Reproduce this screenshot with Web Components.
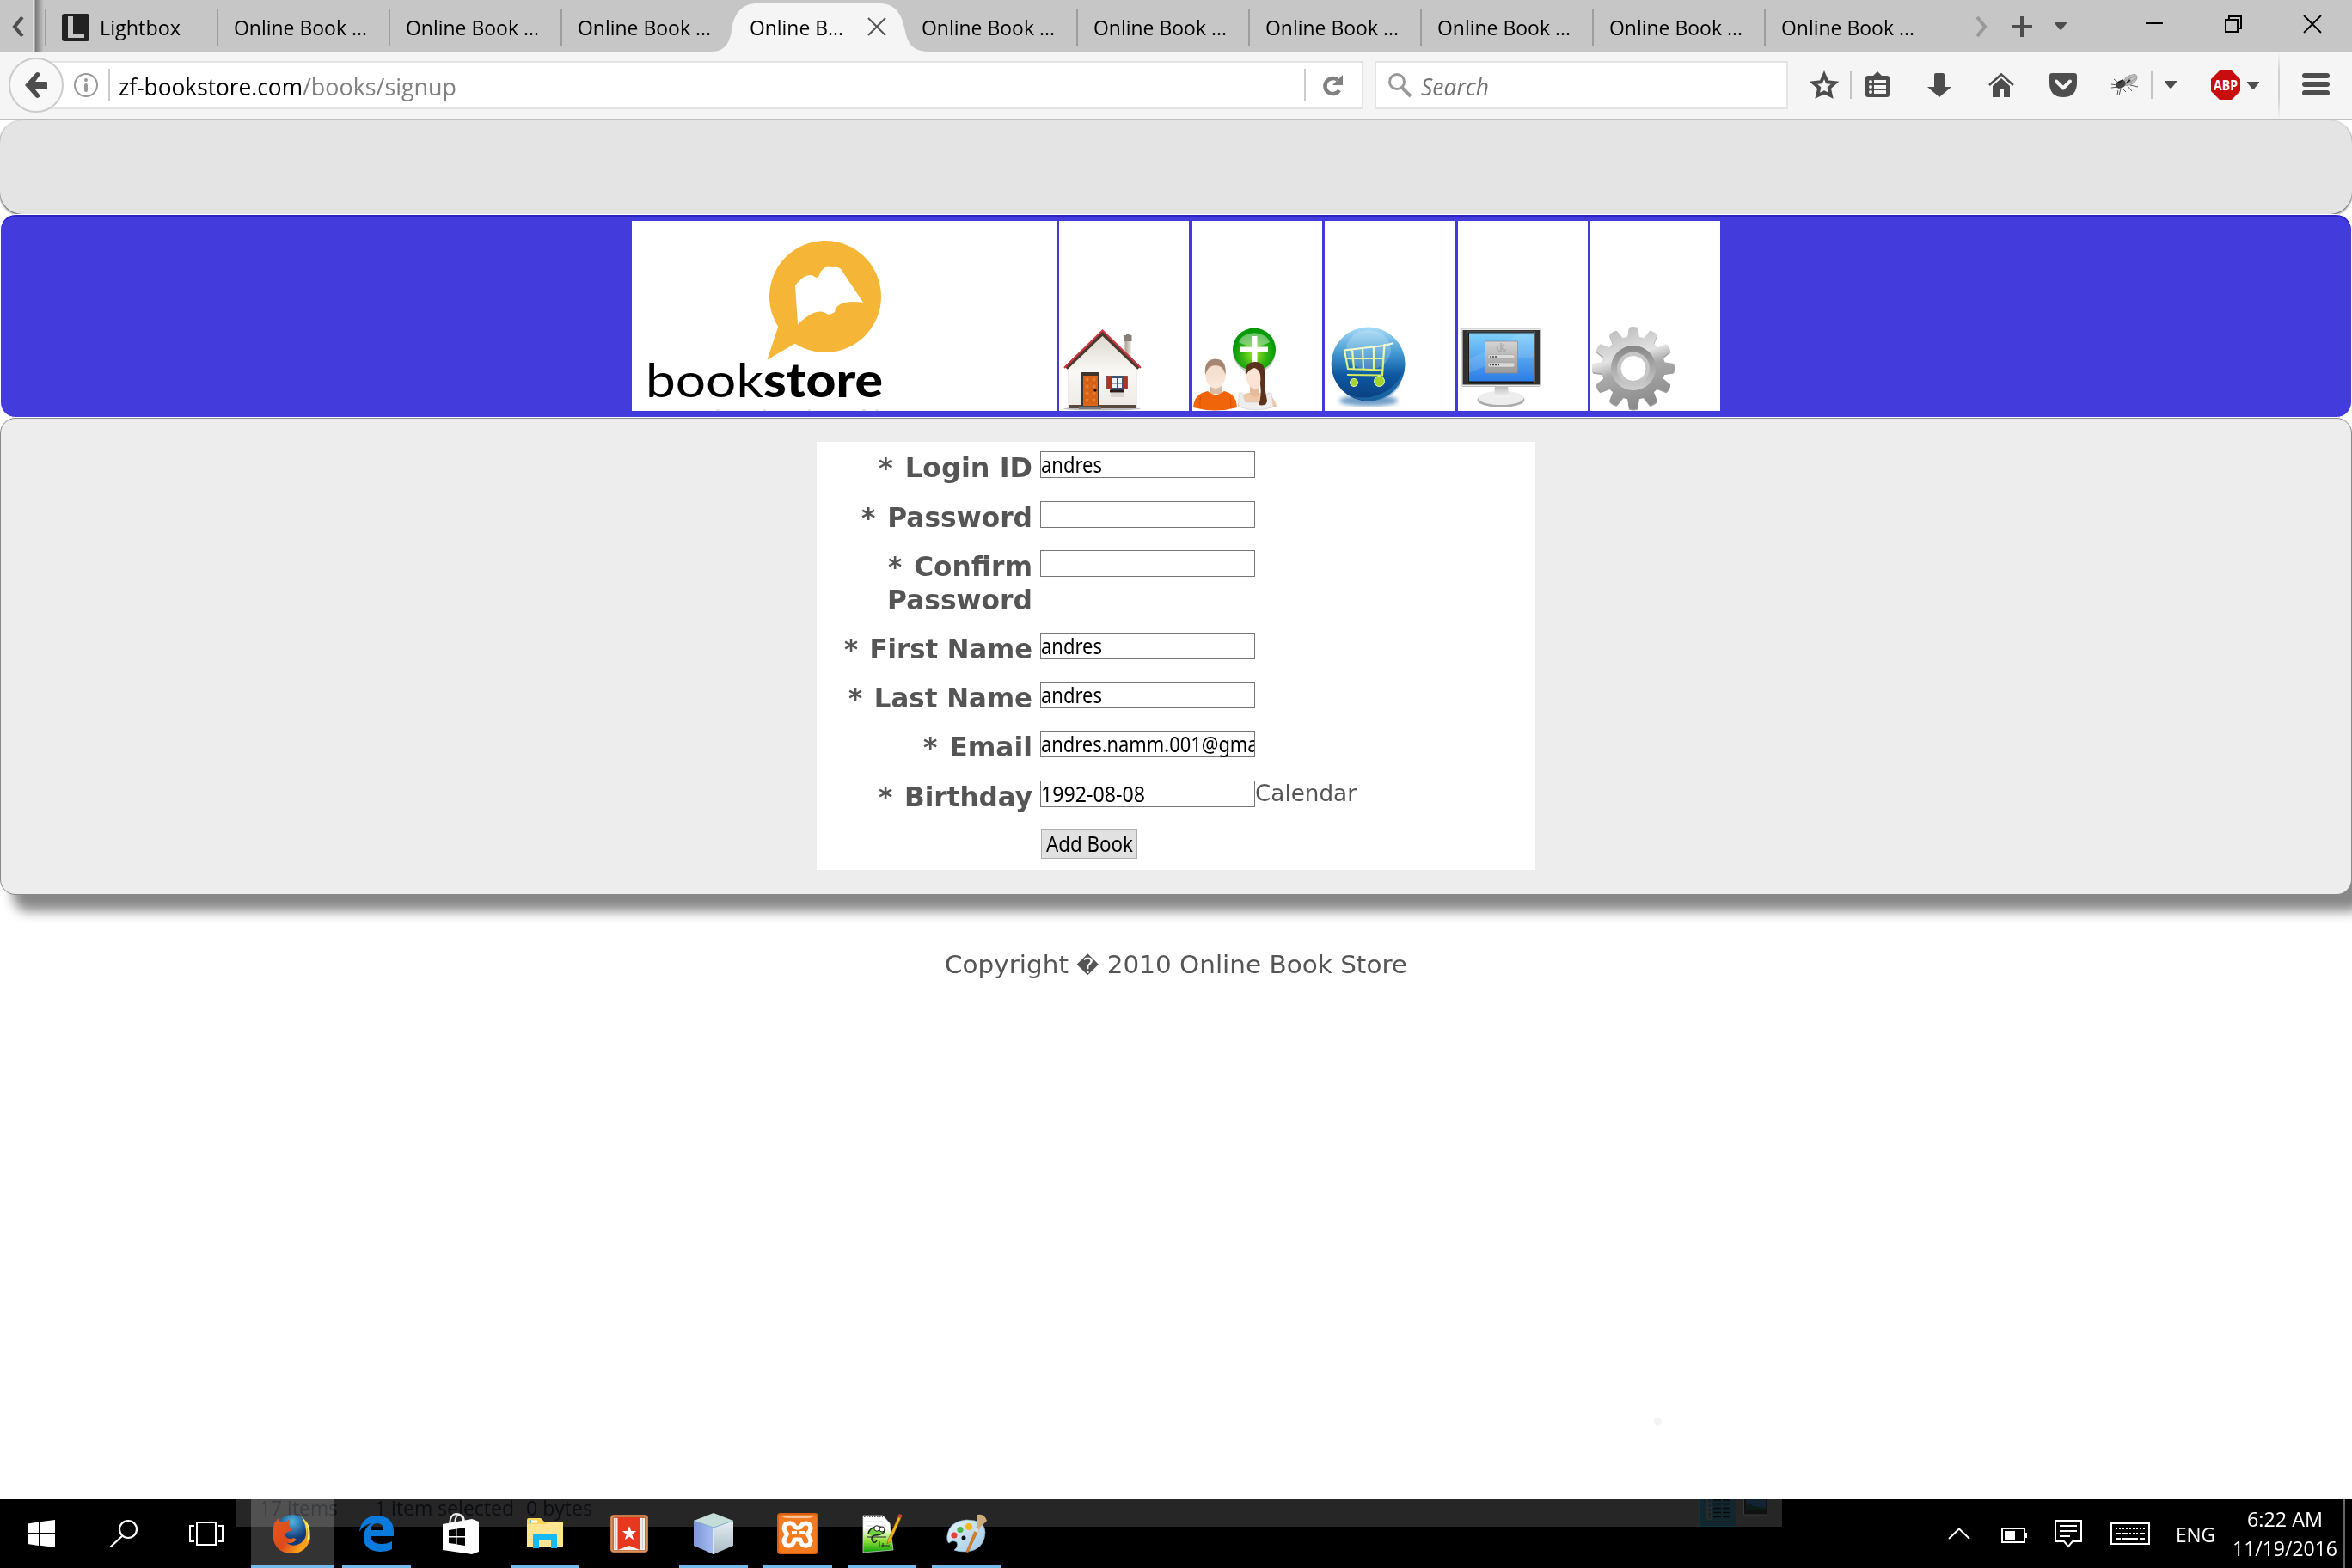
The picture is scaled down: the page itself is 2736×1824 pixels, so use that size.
<!DOCTYPE html>
<html lang="en">
<head>
<meta charset="utf-8">
<title>Online Book Store</title>
<style>
html,body{margin:0;padding:0;background:#fff}
body{width:2736px;height:1824px;overflow:hidden;font-family:"Open Sans","Noto Sans",sans-serif}
</style>
</head>
<body>
<desktop-screen></desktop-screen>
<script>
const define=(name,css,html)=>customElements.define(name,class extends HTMLElement{
  constructor(){super();this.attachShadow({mode:'open'}).innerHTML='<style>*{box-sizing:border-box}'+css+'</style>'+html;}
});

/* Text set to an exact advance width */
customElements.define('fit-text',class extends HTMLElement{
  connectedCallback(){
    const w=+this.getAttribute('w');
    if(!this.shadowRoot)this.attachShadow({mode:'open'}).innerHTML='<style>:host{display:block;flex:none;white-space:pre;width:'+w+'px}span{display:inline-block;transform-origin:0 50%}</style><span><slot></slot></span>';
    const s=this.shadowRoot.querySelector('span');
    const n=s.getBoundingClientRect().width;
    if(n)s.style.transform='scaleX('+(w/n)+')';
  }
});

let teeth='';
for(let i=0;i<12;i++)teeth+='<path d="M43 12 L45 -1 Q50 -3 55 -1 L57 12Z" transform="rotate('+i*30+' 50 46)"/>';

const ICONS={
left:['0 0 14 24','<path d="M12 1L3 12l9 11" fill="none" stroke="#4d4d4d" stroke-width="4"/>'],
right:['0 0 14 24','<path d="M2 1l9 11-9 11" fill="none" stroke="#999" stroke-width="4"/>'],
lightbox:['0 0 32 32','<rect width="32" height="32" rx="3" fill="#222"/><path d="M7 3h6v20h13v5H7z" fill="#c6c6c6"/>'],
tabx:['0 0 20 20','<path d="M0 0l20 20M20 0L0 20" stroke="#555" stroke-width="2"/>'],
plus:['0 0 24 24','<path d="M12 0v24M0 12h24" stroke="#4d4d4d" stroke-width="4"/>'],
tri:['0 0 14 9','<path d="M0 0h14v1L8 8.500H6L0 1z" fill="#4d4d4d"/>'],
min:['0 0 20 20','<path d="M0 9h20" stroke="#000" stroke-width="2"/>'],
restore:['0 0 20 20','<path d="M1 5h14v14H1zM5 5V1h14v14h-4" fill="none" stroke="#000" stroke-width="2"/>'],
close:['0 0 20 20','<path d="M0 0l20 20M20 0L0 20" stroke="#000" stroke-width="1.800"/>'],
back:['0 0 27 32','<path d="M1 16L14 1.500Q16.500 0 19 3.500L13 12h13q1 0 1 1v7q0 1-1 1H13l6 7.500Q16.500 32 14 30.500z" fill="#4d4d4d"/>'],
info:['0 0 28 28','<circle cx="14" cy="14" r="13" fill="none" stroke="#999" stroke-width="2"/><circle cx="14" cy="8" r="2" fill="#999"/><path d="M14 14v6" stroke="#999" stroke-width="4" stroke-linecap="round"/>'],
reload:['0 0 22 24','<path d="M18 18A9 9 0 1 1 16 6" fill="none" stroke="#808080" stroke-width="4.500"/><path d="M22 0v12H10z" fill="#808080"/>'],
mag:['0 0 28 28','<circle cx="10" cy="10" r="8.500" fill="none" stroke="#999" stroke-width="3"/><path d="M16 17l10 10" stroke="#999" stroke-width="4"/>'],
star:['0 0 32 32','<path d="M16 4l3.600 8.300 9 .9-6.800 6 2 9L16 24.500 8.200 28.200l2-9-6.800-6 9-.9z" fill="none" stroke="#4d4d4d" stroke-width="4"/>'],
list:['0 0 28 30','<path d="M3 5h6l5-5 5 5h6q3 0 3 3v19q0 3-3 3H3q-3 0-3-3V8q0-3 3-3z" fill="#4d4d4d"/><g fill="#f5f5f5"><circle cx="6" cy="12" r="2"/><circle cx="6" cy="18" r="2"/><circle cx="6" cy="24" r="2"/><path d="M10 10h14v4H10zM10 16h14v4H10zM10 22h14v4H10z"/></g>'],
down:['0 0 28 28','<path d="M10 0h8q2 0 2 2v14h8L14 28 0 16h8V2q0-2 2-2z" fill="#4d4d4d"/>'],
home:['0 0 30 28','<path d="M1 14L15 1.500 29 14" fill="none" stroke="#4d4d4d" stroke-width="2.500"/><path d="M15 6l10 9v13h-7V18h-5v10H5V15z" fill="#4d4d4d"/>'],
pocket:['0 0 32 28','<path d="M3 0h26q3 0 3 3v8q0 17-16 17T0 11V3q0-3 3-3z" fill="#4d4d4d"/><path d="M8 9.500l8 8 8-8" fill="none" stroke="#f5f5f5" stroke-width="4" stroke-linecap="round" stroke-linejoin="round"/>'],
fly:['0 0 32 26','<g fill="none" stroke="#555" stroke-width="1"><path d="M3 6l5 4M0 12l7 1M0 16l8-1M11 17l-2 8M8 19l-1 5M19 14l5 6M22 13l9 2M13 17l4 4"/></g><ellipse cx="22" cy="7" rx="9" ry="5" transform="rotate(-32 22 7)" fill="#c2c2c2" stroke="#999"/><path d="M14 9l14-7M17 12l12-7M19 4l5 7" stroke="#888" stroke-width=".8"/><ellipse cx="11" cy="12" rx="6" ry="4.500" transform="rotate(-25 11 12)" fill="#444"/><path d="M8 10l6-3M18 10l4-3" stroke="#222" stroke-width="1.800"/>'],
abp:['0 0 34 34','<path d="M10 0h14l10 10v14L24 34H10L0 24V10z" fill="#c70d0d"/><text x="3" y="22.500" font-family="Open Sans" font-weight="bold" font-size="16" fill="#fff" textLength="28" lengthAdjust="spacingAndGlyphs">ABP</text>'],
menu:['0 0 32 26','<g fill="#4d4d4d"><rect width="32" height="6" rx="3"/><rect y="10" width="32" height="6" rx="3"/><rect y="20" width="32" height="6" rx="3"/></g>'],

logo:['0 0 494 221','<g transform="translate(-735 -257)"><path d="M905.600 379L892.500 418.500 926 399z" fill="#f5b637"/><circle cx="960" cy="345" r="65" fill="#f5b637"/><path d="M925 332Q938 316 947 321.500Q951 325 953 320Q957 308 968 311Q975 310 978 312.700L1004 351.700Q973 348 971 363Q964 368 960 364Q948 358 928 377.500z" fill="#fff"/><g font-family="Lato,Open Sans,sans-serif" font-size="55"><text x="751" y="462" textLength="137" lengthAdjust="spacingAndGlyphs">book</text><text x="888" y="462" font-weight="900" textLength="139" lengthAdjust="spacingAndGlyphs">store</text></g><path d="M833 477h4M887 477h4M940 477h3M1003 477h4M1018 477h4" stroke="#ccc" stroke-width="1"/></g>'],

house:['0 0 96 96','<defs><linearGradient id="hw" x2="0" y2="1"><stop offset="0" stop-color="#dcd8cf"/><stop offset=".5" stop-color="#faf8f5"/><stop offset="1" stop-color="#eee9e4"/></linearGradient><linearGradient id="hc"><stop offset="0" stop-color="#a39b8b"/><stop offset="1" stop-color="#f0ede6"/></linearGradient></defs><ellipse cx="50" cy="93.500" rx="45" ry="2" fill="#bbb"/><rect x="76.500" y="9" width="7.500" height="28" fill="url(#hc)"/><path d="M75.500 8h9v7h-9zM78 6.500h4v2h-4z" fill="#867f77"/><path d="M11 42L50.500 8 90 42v50H11z" fill="url(#hw)" stroke="#ccc8c0" stroke-width=".7"/><path d="M8 46L50.500 5.500 93 46" fill="none" stroke="#4a3a30" stroke-width="5"/><path d="M6 46L50.500 2.500 95 46" fill="none" stroke="#d23540" stroke-width="2"/><rect x="11" y="89" width="79" height="4" fill="#594a40"/><rect x="26" y="51" width="21" height="39" fill="#3f352d"/><rect x="28" y="55" width="17" height="35" fill="#dd6518"/><g fill="#e87a2c" stroke="#b24b0c" stroke-width=".5"><path d="M30 57h5v5h-5zM38 57h5v5h-5zM30 65h5v5h-5zM38 65h5v5h-5zM30 73h5v5h-5zM38 73h5v5h-5zM30 81h5v5h-5zM38 81h5v5h-5z"/></g><circle cx="42" cy="72" r="1.700" fill="#111"/><rect x="23" y="91" width="26" height="3" fill="#7a7a7a"/><rect x="55.500" y="55.500" width="24" height="15" fill="#b23420" stroke="#61261f" stroke-width=".6"/><rect x="60" y="55" width="15" height="17" fill="#3e5675"/><path d="M62 58h5v5h-5zM68.500 58H73v5h-4.500zM62 64.500h5V69h-5zM68.500 64.500H73V69h-4.500z" fill="#eef3f5"/><rect x="59" y="71.500" width="17" height="3" fill="#2c1b17"/><rect x="60" y="75" width="15" height="5" fill="#ddd4cf"/>'],

people:['0 0 98 96','<defs><radialGradient id="pg" cy=".62"><stop offset="0" stop-color="#9ae620"/><stop offset=".6" stop-color="#2fb312"/><stop offset="1" stop-color="#079a08"/></radialGradient><linearGradient id="ps" x2="0" y2="1"><stop offset="0" stop-color="#f0d8c4"/><stop offset="1" stop-color="#fbe9dc"/></linearGradient></defs><ellipse cx="72" cy="27" rx="25" ry="25" fill="#999" opacity=".5"/><circle cx="72" cy="24.500" r="25" fill="url(#pg)"/><path d="M54 16a18.500 14 0 0 1 36 0q-18 10-36 0z" fill="#fff" opacity=".4"/><path d="M69 9h6.500v12.500H88v6.500H75.500v14H69V28H56v-6.500h13z" fill="#fff"/><path d="M20 64h14v12H20z" fill="#d9bda5"/><path d="M1 92Q2 76 18 73q9 8 19 0 14 3 15 19-25 7-51 0z" fill="#f0640a"/><path d="M10 80q-2 8-1 13M44 80q1 6 1 13" stroke="#d95500" fill="none"/><path d="M15 51q0-15 12-15t12 15q0 17-12 19-12-2-12-19z" fill="url(#ps)"/><path d="M15 54Q13 36 27 35.500 40 36 38.500 54 36 43 27 43T15 54z" fill="#a48672"/><path d="M53 91q0-14 12-16h16q15 2 17 16-22 7-45 0z" fill="#efc9a7"/><path d="M54 75h4l4 11h20l6-11h4l2 16q-20 8-40 0z" fill="#eeeeee" stroke="#ccc" stroke-width=".6"/><path d="M67 65h11v12l-5 4-6-4z" fill="#e6bd9c"/><path d="M62 54q0-14 11-14t11 14q-1 14-11 17-10-3-11-17z" fill="#fbe4d3"/><path d="M62 55Q60 39 73 39t11 17q0 15 3 28 0 7-10 5 4-9 2-25Q81 48 72 46 66 47 62 55z" fill="#5c321c"/>'],

cart:['0 0 98 96','<defs><linearGradient id="cg" x2="0" y2="1"><stop offset="0" stop-color="#a8dcf8"/><stop offset=".35" stop-color="#439ad2"/><stop offset=".65" stop-color="#0d58a0"/><stop offset="1" stop-color="#0b3d7d"/></linearGradient><linearGradient id="cl" x2="0" y2="1"><stop offset="0" stop-color="#f7fbe0"/><stop offset="1" stop-color="#d2ec5e"/></linearGradient><filter id="cb"><feGaussianBlur stdDeviation="2.500"/></filter></defs><ellipse cx="51" cy="84" rx="34" ry="6.500" fill="#6d9dc6" filter="url(#cb)"/><circle cx="50.600" cy="41.500" r="43" fill="url(#cg)"/><ellipse cx="51" cy="25" rx="26" ry="23" fill="#fff" opacity=".2"/><path d="M60 78q22-7 31-27-2 28-31 33-18 2-30-6 16 5 30 0z" fill="#2c81bd" opacity=".5"/><g fill="none" stroke="url(#cl)" stroke-width="2.200"><path d="M80 17L69.500 20 23 25.500 27 47l40 1.500M69.500 18L67 54.500 26 54M32 25l2 22M44 23l1 24M57 22l0 26M25 35h43"/></g><circle cx="34" cy="63" r="4.500" fill="#a2d62c" stroke="#eef7c0"/><circle cx="63.500" cy="61.500" r="6" fill="#a2d62c" stroke="#eef7c0"/>'],

monitor:['0 0 98 96','<defs><linearGradient id="mg" x2="0" y2="1"><stop offset="0" stop-color="#7fd0fa"/><stop offset="1" stop-color="#2c7ce6"/></linearGradient><linearGradient id="ms" x2="0" y2="1"><stop offset="0" stop-color="#b5b5b5"/><stop offset="1" stop-color="#f5f5f5"/></linearGradient><linearGradient id="mc" x2="0" y2="1"><stop offset="0" stop-color="#d4d4d4"/><stop offset="1" stop-color="#999"/></linearGradient></defs><ellipse cx="50" cy="83" rx="27.500" ry="9" fill="#aaa"/><ellipse cx="50" cy="81" rx="26.500" ry="8" fill="#ededed"/><path d="M43 66h15l1 14H42z" fill="url(#ms)"/><rect x="4" y="0" width="92.500" height="67.500" rx="2" fill="#eee" stroke="#bbb" stroke-width="1"/><rect x="5.500" y="2" width="89.500" height="63.500" fill="#303030"/><rect x="11" y="4" width="78.500" height="59.500" fill="#161616" stroke="#777" stroke-width=".7"/><rect x="13" y="5.500" width="75" height="56" fill="url(#mg)"/><path d="M88 5.500v28L50 36 13 52V36L74 5.500z" fill="#fff" opacity=".12"/><rect x="31.500" y="15" width="38" height="37" rx="1" fill="url(#mc)" stroke="#888" stroke-width=".7"/><path d="M50 17v9m0-4l4-4m-4 4l4 4m-8-5q-2 5 4 6t5-3" fill="none" stroke="#aaa" stroke-width="1.500"/><rect x="35" y="30.500" width="31" height="5" rx="2" fill="#dadada" stroke="#999" stroke-width=".5"/><rect x="35" y="40" width="31" height="5" rx="2" fill="#dadada" stroke="#999" stroke-width=".5"/><path d="M37 33h10M37 42.500h12" stroke="#444" stroke-width="1.500" stroke-dasharray="2 1"/>'],

gear:['0 0 98 96','<defs><linearGradient id="gg" x2=".3" y2="1"><stop offset="0" stop-color="#b0b0b0"/><stop offset=".45" stop-color="#e2e2e2"/><stop offset=".6" stop-color="#aaa"/><stop offset="1" stop-color="#8c8c8c"/></linearGradient><linearGradient id="gi" x2="0" y2="1"><stop offset="0" stop-color="#858585"/><stop offset="1" stop-color="#d0d0d0"/></linearGradient><mask id="gm"><rect x="-5" y="-5" width="110" height="110" fill="#000"/><g fill="#fff"><circle cx="50" cy="46" r="37"/>'+teeth+'</g><circle cx="50" cy="46.500" r="15" fill="#000"/></mask></defs><g fill="#777" opacity=".7" transform="translate(0 1.500)">'+teeth+'</g><g mask="url(#gm)"><rect x="-2" y="-4" width="102" height="102" fill="url(#gg)"/><circle cx="50" cy="46" r="26" fill="url(#gi)"/><circle cx="50" cy="46.500" r="19" fill="#c6c6c6"/></g><circle cx="50" cy="46.500" r="15" fill="#fff" stroke="#aaa" stroke-width=".7"/>'],

win:['0 0 32 32','<path d="M0 4.500l13-2V15H0zM14.500 2.300L32 0v15H14.500zM0 16.500h13V30L0 28zM14.500 16.500H32V32l-17.500-2.300z" fill="#fff"/>'],
search:['0 0 32 32','<circle cx="21" cy="11" r="10" fill="none" stroke="#fff" stroke-width="2.200"/><path d="M14 19L.5 31.500" stroke="#fff" stroke-width="2.200"/>'],
taskview:['0 0 40 28','<path d="M9 1h22v26H9zM6 5H1v18h5M34 5h5v18h-5" fill="none" stroke="#fff" stroke-width="2"/>'],
firefox:['0 0 46 46','<defs><radialGradient id="fb" cx=".5" cy=".2"><stop offset="0" stop-color="#4db8e4"/><stop offset="1" stop-color="#123a78"/></radialGradient><linearGradient id="fo" x2=".9" y2=".6"><stop offset="0" stop-color="#e25a1c"/><stop offset=".6" stop-color="#dd4a1c"/><stop offset="1" stop-color="#f9a01b"/></linearGradient></defs><circle cx="23" cy="21" r="20" fill="url(#fb)"/><path d="M33 3q10 7 10 19 0 17-18 21 16-10 14-24-1-10-6-16z" fill="#ffd93a"/><path d="M2 11l5-6 2 5q4-2 7 0l4-4-1 7 3 6-6 3q-3 3 1 6 4 2 8 0l3 2q-6 6-12 3 7 7 17 1 9-7 7-18 6 8 3 16-6 14-20 14Q5 46 1 30 0 22 2 11z" fill="url(#fo)"/><path d="M39 8q7 10 3 22l-2 3q3-13-1-25z" fill="#fff07a"/>'],
edge:['0 0 40 42','<path d="M0 19Q3 0 21 0 40 1 40 19v5H13q1 9 13 9 7 0 12-3v9q-6 3-14 3Q5 41 5 25 5 14 15 9 5 10 0 19zM13 17h15q0-8-7-8t-8 8z" fill="#0a7bdc"/>'],
store:['0 0 42 48','<path d="M8 13Q9 1 16 1t8 9M14 12Q15 1 20 2t5 8" fill="none" stroke="#eee" stroke-width="2"/><path d="M0 13l34-6 8 3v35l-8 3-34-5z" fill="#fff"/><path d="M7 20l8-1.200V27H7zM16.500 18.600L26 17v10h-9.500zM7 28.500h8V36l-8-1zM16.500 28.500H26V38l-9.500-1.500z" fill="#000"/>'],
folder:['0 0 42 36','<path d="M0 2q0-2 2-2h14l4 4h20q2 0 2 2v26q0 2-2 2H2q-2 0-2-2z" fill="#fbd45a"/><path d="M0 7h22l3-3h17v28q0 2-2 2H2q-2 0-2-2z" fill="#ffe58f"/><path d="M3 2.500h9v3H3z" fill="#fff"/><path d="M3 2.500h2v3H3z" fill="#1ab7ea"/><path d="M7 35V20q0-2 2-2h24q2 0 2 2v15h-7V25H14v10z" fill="#16b9f2"/>'],
wunder:['0 0 44 44','<rect width="44" height="44" rx="4" fill="#bd6f43"/><rect x="1.500" y="1.500" width="41" height="41" rx="3" fill="none" stroke="#dc935f" stroke-width="1.500"/><rect x="4" y="4" width="36" height="37" fill="#f4efec"/><path d="M8.500 3h26v38L22 36 8.500 41z" fill="#e8371f"/><path d="M5.500 4v36M37.500 4v36" stroke="#d4c9c4" stroke-width="1"/><path d="M22 13l2.200 6h6l-5 4 2 6.500-5.200-4-5.200 4 2-6.500-5-4h6z" fill="#fff"/>'],
cube:['0 0 46 48','<defs><linearGradient id="q1"><stop offset="0" stop-color="#7d97d8"/><stop offset="1" stop-color="#a6bdf0"/></linearGradient><linearGradient id="q2" x2="0" y2="1"><stop offset="0" stop-color="#e5eef2"/><stop offset="1" stop-color="#a9bac5"/></linearGradient></defs><path d="M23 0l23 9-23 8L0 9z" fill="#c4ddd8"/><path d="M0 9l23 8v31L0 38z" fill="url(#q1)"/><path d="M46 9l-23 8v31l23-10z" fill="url(#q2)"/><path d="M0 9l23 8 23-8" fill="none" stroke="#8ab1d8" stroke-width="1"/><path d="M23 17v31" stroke="#e8f0ff" stroke-width="1.500"/>'],
xampp:['0 0 48 48','<rect width="48" height="48" rx="4" fill="#d75f0f"/><rect x="2" y="2" width="44" height="44" rx="3" fill="#f47a20"/><path d="M5 3h38q-2 3-8 3H13Q7 6 5 3z" fill="#fbc49a"/><path d="M12 12.500q4-2 7 1l2 3q3 1.500 6 0l2-3q5-3 8.500 0 3 4 0 8l-2 3 2 4q3 4 0 8-3.500 3-8 0.500-2-2-2.500-6h-7q-.500 4-2.500 6-4.500 2.500-8-.500-3-4 0-8l2-4-2-3q-3-4 .500-9z" fill="none" stroke="#fff" stroke-width="5" stroke-linejoin="round"/><path d="M17 22.500h6M25 22.500h8" stroke="#fff" stroke-width="3"/>'],
npp:['0 0 46 46','<defs><linearGradient id="ng" x2="0" y2="1"><stop offset=".35" stop-color="#fff"/><stop offset=".7" stop-color="#8ade33"/><stop offset="1" stop-color="#0da00d"/></linearGradient></defs><path d="M1 2h23l8 9 4 31L1 45z" fill="url(#ng)" stroke="#ddd" stroke-width=".7"/><path d="M2 3h22" stroke="#555" stroke-width="2" stroke-dasharray="1.500 1.500"/><path d="M4 9h20M4 14h24M4 19h24" stroke="#ccc" stroke-width=".8"/><path d="M7 23q2-8 12-8 6 0 7 6-5 4-11 4-6 1-3 7 3 3 5-1" fill="#6fd33a" stroke="#222" stroke-width="1.500"/><circle cx="17" cy="17" r="3.200" fill="#fff" stroke="#222"/><circle cx="23" cy="18" r="3" fill="#fff" stroke="#222"/><path d="M6 27h22M20 32v7m4-5v5m-2-2h10" stroke="#222" stroke-width="1"/><path d="M43 1l3 1.500L33 32l-4 3 1-5z" fill="#f0b417" stroke="#7a5a10" stroke-width=".6"/><path d="M43 0l3 1-1.500 4-3.500-1z" fill="#c63c3c"/>'],
paint:['0 0 47 46','<defs><linearGradient id="pp" x2="1" y2="1"><stop offset="0" stop-color="#e8f3fa"/><stop offset="1" stop-color="#9cc8e6"/></linearGradient></defs><path d="M1 25Q3 9 23 7q22 0 22 15-1 20-22 22-10 0-14-2 5-4 3-9-5-3-9 1-3-2-2-9z" fill="url(#pp)" stroke="#7fb0d2" stroke-width=".7"/><circle cx="9" cy="25" r="3.600" fill="#e4423a"/><circle cx="16" cy="18.500" r="3.600" fill="#4cb648"/><circle cx="26" cy="15" r="4" fill="#f6b51c"/><circle cx="20" cy="28" r="2.500" fill="#111"/><path d="M35 15l3 2-13 28-2-1z" fill="#e07d1c" stroke="#a5540b" stroke-width=".5"/><path d="M35 15l1-14q8-2 11 7l-9 9z" fill="#cdab7d"/><path d="M34 15l4 3-2 4-4-2z" fill="#ddd"/>'],
up:['0 0 26 14','<path d="M1 13L13 1.500 25 13" fill="none" stroke="#fff" stroke-width="2"/>'],
battery:['0 0 30 18','<path d="M1 1h26v16H1z" fill="none" stroke="#fff" stroke-width="2"/><path d="M4 4h12v10H4zM27 6h3v6h-3z" fill="#fff"/>'],
msg:['0 0 32 32','<path d="M1 1h30v24H21l-5 6-5-6H1zM6 7h20M6 13h20M6 19h12" fill="none" stroke="#fff" stroke-width="2"/>'],
kbd:['0 0 46 26','<rect x="1" y="1" width="44" height="24" fill="none" stroke="#fff" stroke-width="2"/><g stroke="#fff" stroke-width="2"><path d="M6 7h34" stroke-dasharray="2 2"/><path d="M6 13h6M14 13h18M34 13h6" stroke-dasharray="6 2 2 2 2 2 2 2 2 2"/><path d="M6 19h6M14 19h18M34 19h6"/></g>'],
details:['0 0 98 32','<path d="M.5 0v31.500h43V0" fill="#13262d" stroke="#0d3542"/><g stroke="#080b0d" stroke-width="1.500"><path d="M17 1h9M28 1h9M17 5.500h9M28 5.500h9M17 10.500h9M28 10.500h9M17 15.500h9M28 15.500h9M17 20.500h9M28 20.500h9"/></g><path d="M10 0v23h5V0M10 5h5m-5 5h5m-5 5h5m-5 5h5" fill="none" stroke="#39302b"/><path d="M52.500 0v18h27V0" fill="#111" stroke="#3a3a3a"/><path d="M55 0h23v10H55z" fill="#142334"/><path d="M55 7q5-4 8 1l15 2v2H55z" fill="#0e1c16"/>']
};
customElements.define('ui-icon',class extends HTMLElement{
  connectedCallback(){
    if(this.shadowRoot)return;
    const [box,body]=ICONS[this.getAttribute('name')];
    const d=box.split(' ');
    const w=this.getAttribute('w')||d[2],h=this.getAttribute('h')||d[3];
    this.attachShadow({mode:'open'}).innerHTML='<style>:host{display:block;flex:none;width:'+w+'px;height:'+h+'px}svg{display:block;overflow:visible}</style><svg width="'+w+'" height="'+h+'" viewBox="'+box+'" preserveAspectRatio="none">'+body+'</svg>';
  }
});

define('browser-tab',`
:host{display:flex;flex:none;width:200px;height:60px;align-items:center;position:relative}
i{width:2px;height:44px;background:#9d9d9d;margin-top:4px;flex:none}
:host([active]) i,:host([after]) i{visibility:hidden}
slot{display:flex;align-items:center}
.c{display:flex;align-items:center;padding:3px 0 0 18px;font-size:24px;color:#000;position:relative}
svg{display:none;position:absolute;left:-24px;top:0}
:host([active]) svg{display:block}
`,`<svg width="252" height="60"><path d="M0 60C20 60 22 42 24 30S34 4 52 4H196C214 4 221 18 224 32S230 60 252 60z" fill="#f5f5f5"/></svg><i></i><div class="c"><slot></slot></div>`);

define('tab-strip',`
:host{display:flex;height:60px;background:#c6c6c6;align-items:flex-start}
.edge{width:13px;height:60px;margin-left:10px;background:linear-gradient(90deg,#ddd 0 2px,#777 3px,#c6c6c6)}
.tabs{display:flex;margin-left:1px;height:60px}
ui-icon{margin-top:19px}
`,`<ui-icon name="left" style="margin-left:14px"></ui-icon><div class="edge"></div>
<div class="tabs">
<browser-tab><ui-icon name="lightbox" style="margin:0 12px 0 0"></ui-icon><fit-text w="94">Lightbox</fit-text></browser-tab>
<browser-tab><fit-text w="155">Online Book ...</fit-text></browser-tab>
<browser-tab><fit-text w="155">Online Book ...</fit-text></browser-tab>
<browser-tab><fit-text w="155">Online Book ...</fit-text></browser-tab>
<browser-tab active><fit-text w="109">Online B...</fit-text><ui-icon name="tabx" style="margin:-2px 0 0 29px"></ui-icon></browser-tab>
<browser-tab after><fit-text w="155">Online Book ...</fit-text></browser-tab>
<browser-tab><fit-text w="155">Online Book ...</fit-text></browser-tab>
<browser-tab><fit-text w="155">Online Book ...</fit-text></browser-tab>
<browser-tab><fit-text w="155">Online Book ...</fit-text></browser-tab>
<browser-tab><fit-text w="155">Online Book ...</fit-text></browser-tab>
<browser-tab><fit-text w="155">Online Book ...</fit-text></browser-tab></div>
<ui-icon name="right" style="margin-left:46px"></ui-icon>
<ui-icon name="plus" style="margin-left:28px"></ui-icon>
<ui-icon name="tri" style="margin-left:26px;margin-top:26px"></ui-icon>
<ui-icon name="min" style="margin-left:92px;margin-top:18px"></ui-icon>
<ui-icon name="restore" style="margin-left:72px;margin-top:18px"></ui-icon>
<ui-icon name="close" style="margin-left:72px;margin-top:18px"></ui-icon>`);

define('nav-toolbar',`
:host{display:flex;box-sizing:border-box;height:80px;background:#f5f5f5;border-bottom:2px solid #bdbdbd;align-items:center;font-size:27px}
.back{width:64px;height:64px;border:2px solid #ccc;border-radius:50%;background:#f8f8f8;margin-left:10px;display:flex;align-items:center;padding-left:16px;flex:none;position:relative;z-index:1}
.f{height:56px;background:#fff;border:2px solid #e4e4e4;display:flex;align-items:center;flex:none}
.url{width:1542px;margin-left:-30px;padding-left:40px}
.s{width:2px;height:38px;background:#ccc;flex:none}
fit-text{margin-top:3px}
.q{width:481px;margin-left:13px;padding-left:14px;color:#737373;font-style:italic}
.t{height:32px;background:#c4c4c4}
`,`<div class="back"><ui-icon name="back"></ui-icon></div>
<div class="f url"><ui-icon name="info"></ui-icon><div class="s" style="margin:0 10px 0 12px"></div><fit-text w="214">zf-bookstore.com</fit-text><fit-text w="179" style="color:#808080">/books/signup</fit-text><div class="s" style="margin-left:986px"></div><ui-icon name="reload" style="margin-left:21px"></ui-icon></div>
<div class="f q"><ui-icon name="mag"></ui-icon><fit-text w="79" style="margin-left:10px">Search</fit-text></div>
<ui-icon name="star" style="margin-left:26px"></ui-icon><div class="s t" style="margin-left:14px"></div>
<ui-icon name="list" style="margin-left:16px;margin-top:-2px"></ui-icon>
<ui-icon name="down" style="margin-left:44px"></ui-icon>
<ui-icon name="home" style="margin-left:43px"></ui-icon>
<ui-icon name="pocket" style="margin-left:41px"></ui-icon>
<ui-icon name="fly" style="margin-left:40px"></ui-icon><div class="s t" style="margin-left:14px"></div>
<ui-icon name="tri" style="margin-left:14px;margin-top:-2px"></ui-icon>
<ui-icon name="abp" style="margin-left:40px"></ui-icon><ui-icon name="tri" style="margin-left:8px"></ui-icon>
<div class="s" style="height:78px;margin-left:22px;background:linear-gradient(#f5f5f5,#d2d2d2 30% 70%,#f5f5f5)"></div><ui-icon name="menu" style="margin-left:26px;margin-top:-2px"></ui-icon>`);

define('store-nav',`
:host{display:flex;height:237px;background:#443bdc;border:1px solid #fff;border-radius:18px;box-sizing:border-box;position:relative;padding:7px 0 0 734px;box-shadow:inset 0 2px 0 #2d23c4}
.r{display:flex;height:221px}
.c{width:151px;margin-left:4px;background:#fff;display:flex;align-items:flex-end}
.n{margin-left:3px}
.l{width:494px;margin-left:0;overflow:hidden}
`,`<div class="r"><div class="c l"><ui-icon name="logo"></ui-icon></div>
<div class="c n"><ui-icon name="house"></ui-icon></div><div class="c"><ui-icon name="people"></ui-icon></div><div class="c n"><ui-icon name="cart"></ui-icon></div><div class="c"><ui-icon name="monitor"></ui-icon></div><div class="c n"><ui-icon name="gear"></ui-icon></div></div>`);

define('form-row',`
:host{display:flex;align-items:flex-start;height:57px}
.l{width:251px;margin-right:9px;display:flex;flex-direction:column;align-items:flex-end;font-weight:bold;font-size:32px;line-height:38.500px;color:#555}
`,`<div class="l"><slot name="label"></slot></div><slot></slot>`);

define('text-box',`
:host{display:block;width:250px;height:31px;border:1px solid #767676;box-sizing:border-box;overflow-x:clip;overflow-y:visible;background:#fff;color:#000;font:25.500px/28px "Noto Sans","Open Sans",sans-serif;flex:none}
`,`<slot></slot>`);

define('signup-form',`
:host{display:block;width:836px;height:498px;background:#fff;padding-top:11px;box-sizing:border-box;font-family:"DejaVu Sans",sans-serif}
b{letter-spacing:3px}
.b{width:112px;height:35px;margin-left:1px;border:1px solid #adadad;background:#e1e1e1;font:25.500px/32px "Noto Sans","Open Sans",sans-serif;padding-left:5px}
`,`<form-row style="height:58px"><fit-text slot="label" w="179"><b>*</b> Login ID</fit-text><text-box><fit-text w="71">andres</fit-text></text-box></form-row>
<form-row><fit-text slot="label" w="199"><b>*</b> Password</fit-text><text-box></text-box></form-row>
<form-row style="height:96px"><fit-text slot="label" w="168"><b>*</b> Confirm</fit-text><fit-text slot="label" w="169">Password</fit-text><text-box></text-box></form-row>
<form-row><fit-text slot="label" w="219"><b>*</b> First Name</fit-text><text-box><fit-text w="71">andres</fit-text></text-box></form-row>
<form-row><fit-text slot="label" w="214"><b>*</b> Last Name</fit-text><text-box><fit-text w="71">andres</fit-text></text-box></form-row>
<form-row style="height:58px"><fit-text slot="label" w="127"><b>*</b> Email</fit-text><text-box><fit-text w="314">andres.namm.001@gmail.com</fit-text></text-box></form-row>
<form-row style="height:56px"><fit-text slot="label" w="179"><b>*</b> Birthday</fit-text><text-box><fit-text w="121">1992-08-08</fit-text></text-box><fit-text w="118" style="font-size:26px;line-height:31px;color:#555">Calendar</fit-text></form-row>
<form-row><div class="b"><fit-text w="101">Add Book</fit-text></div></form-row>`);

define('store-page',`
:host{display:flex;flex-direction:column;height:1604px;background:#fff;overflow:hidden}
.top{height:109px;background:#e4e4e4;border-radius:26px;box-shadow:0 1px 3px #222;flex:none}
store-nav{flex:none}
.main{height:555px;background:#ededed;border:1px solid #888;border-radius:18px;box-shadow:15px 19px 14px #888;display:flex;justify-content:center;padding-top:27px;flex:none}
.foot{display:flex;justify-content:center;margin-top:61px;font:29px/40px "DejaVu Sans",sans-serif;color:#555}
.foot span{font-size:25px}
.dot{width:9px;height:10px;border-radius:50%;background:#f3f3f3;margin:505px 0 0 1924px}
`,`<div class="top"></div><store-nav></store-nav><div class="main"><signup-form></signup-form></div><div class="foot"><fit-text w="538">Copyright <span>\uFFFD</span> 2010 Online Book Store</fit-text></div><div class="dot"></div>`);

define('task-button',`
:host{display:flex;width:96px;height:80px;margin-right:2px;flex:none;flex-direction:column;align-items:center;justify-content:center;box-sizing:border-box;position:relative}
:host([active]){background:rgba(255,255,255,.2)}
i{display:none;position:absolute;bottom:0;left:8px;right:8px;height:4px;background:#76b9ed}
:host([open]) i{display:block}
:host([active]) i{left:0;right:0}
`,`<slot></slot><i></i>`);

define('task-bar',`
:host{display:flex;height:80px;background:#000;position:relative;color:#fff;font-size:24px}
.ghost{position:absolute;left:274px;top:0;width:1799px;height:32px;background:#262626;color:#0b0d12;display:flex;line-height:20px}
.row{display:flex;position:relative;width:100%}
.tray{display:flex;align-items:center;margin-left:auto;height:80px}
.clock{display:flex;flex-direction:column;align-items:center;line-height:34px;width:120px;padding-top:0}
`,`<div class="ghost"><fit-text w="91" style="margin-left:28px">17 items</fit-text><fit-text w="162" style="margin-left:43px">1 item selected</fit-text><fit-text w="77" style="margin-left:14px">0 bytes</fit-text><ui-icon name="details" style="margin-left:1287px"></ui-icon></div>
<div class="row">
<task-button style="margin-right:0"><ui-icon name="win"></ui-icon></task-button>
<task-button style="margin-right:0"><ui-icon name="search"></ui-icon></task-button>
<task-button style="margin-right:4px"><ui-icon name="taskview"></ui-icon></task-button>
<task-button open active><ui-icon name="firefox"></ui-icon></task-button>
<task-button open><ui-icon name="edge"></ui-icon></task-button>
<task-button><ui-icon name="store"></ui-icon></task-button>
<task-button open><ui-icon name="folder"></ui-icon></task-button>
<task-button><ui-icon name="wunder"></ui-icon></task-button>
<task-button open><ui-icon name="cube"></ui-icon></task-button>
<task-button open><ui-icon name="xampp"></ui-icon></task-button>
<task-button open><ui-icon name="npp"></ui-icon></task-button>
<task-button open><ui-icon name="paint"></ui-icon></task-button>
<div class="tray"><ui-icon name="up"></ui-icon><ui-icon name="battery" style="margin-left:36px;margin-top:3px"></ui-icon><ui-icon name="msg" style="margin-left:32px"></ui-icon><ui-icon name="kbd" style="margin-left:33px"></ui-icon><fit-text w="46" style="margin-left:30px;margin-top:1px">ENG</fit-text>
<div class="clock" style="margin-left:21px"><fit-text w="88">6:22 AM</fit-text><fit-text w="122">11/19/2016</fit-text></div><div style="width:2px;height:80px;background:#666;margin:0 8px"></div></div>
</div>`);

define('desktop-screen',`:host{display:block;width:2736px;height:1824px;overflow:hidden}`,`<tab-strip></tab-strip><nav-toolbar></nav-toolbar><store-page></store-page><task-bar></task-bar>`);
</script>
</body>
</html>
